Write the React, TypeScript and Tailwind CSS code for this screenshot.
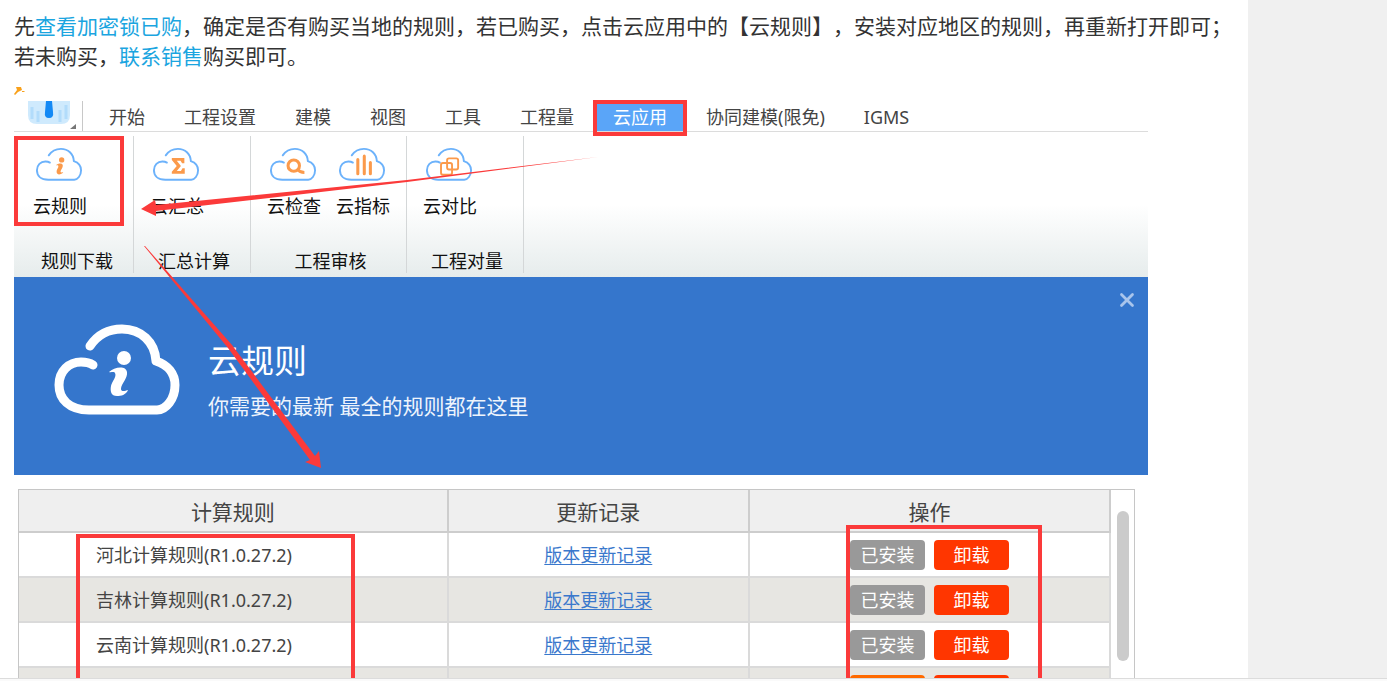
import type { ReactNode } from "react";
import { X } from "lucide-react";

const TABS = ["开始", "工程设置", "建模", "视图", "工具", "工程量", "云应用", "协同建模(限免)", "IGMS"];
const ACTIVE_TAB = "云应用";

const ORANGE = "#fb9a4b";

type Tool = { label: string; glyph: ReactNode };

const GROUPS: { title: string; className: string; tools: Tool[] }[] = [
  {
    title: "规则下载",
    className: "w-[120px] pl-[19px]",
    tools: [{ label: "云规则", glyph: <InfoGlyph color={ORANGE} /> }],
  },
  {
    title: "汇总计算",
    className: "w-[117px] pl-4",
    tools: [
      {
        label: "云汇总",
        glyph: (
          <path
            d="M52 29H85V43H79L75 36H65L76 50L65 63H76L80 56H86V70H52V65L65 50L52 34Z"
            fill={ORANGE}
          />
        ),
      },
    ],
  },
  {
    title: "工程审核",
    className: "w-[156px] pl-4",
    tools: [
      {
        label: "云检查",
        glyph: (
          <g fill="none" stroke={ORANGE} strokeWidth="8">
            <circle cx="65" cy="49" r="15" />
            <path d="M74 58Q81 67 93 67" />
          </g>
        ),
      },
      {
        label: "云指标",
        glyph: (
          <path d="M52 33V70M69 24V70M85 41V70" stroke={ORANGE} strokeWidth="8" strokeLinecap="round" />
        ),
      },
    ],
  },
  {
    title: "工程对量",
    className: "w-[117px] pl-4",
    tools: [
      {
        label: "云对比",
        glyph: (
          <g fill="none" stroke={ORANGE} strokeWidth="5">
            <rect x="42" y="42" width="29" height="31" rx="5" />
            <rect x="58" y="30" width="29" height="29" rx="5" />
          </g>
        ),
      },
    ],
  },
];

const RULES = ["河北计算规则(R1.0.27.2)", "吉林计算规则(R1.0.27.2)", "云南计算规则(R1.0.27.2)"];

function InfoGlyph({ color }: { color: string }) {
  return (
    <g fill={color}>
      <circle cx="70" cy="34" r="7" />
      <path d="M55 48C60 43 72 41 73 48C74 54 67 60 67 65C67 68 71 67 74 66C72 71 67 72 63 72C57 72 56 67 57 62C58 57 63 53 61 49C60 47 57 49 55 48Z" />
    </g>
  );
}

function Cloud({
  className,
  color,
  strokeWidth,
  children,
}: {
  className: string;
  color: string;
  strokeWidth: number;
  children: ReactNode;
}) {
  return (
    <svg viewBox="0 0 126 92" className={className} aria-hidden="true">
      <path
        d="M36 22C44 10 55 5 68 5C87 5 101 18 102 37C114 41 121 50 121 61C121 75 112 86 103 86H35C15 86 5 75 5 61C5 47 15 38 27 38C32 38 36 39 39 41"
        fill="none"
        stroke={color}
        strokeWidth={strokeWidth}
        strokeLinecap="round"
        strokeLinejoin="round"
      />
      {children}
    </svg>
  );
}

function TabBar() {
  return (
    <div className="flex h-[31px] border-b border-[#dcdcdc]">
      <div className="flex w-[69px] shrink-0 border-r border-[#c8c8c8]">
        <svg viewBox="0 0 68 30" className="h-[30px] w-[68px]" aria-hidden="true">
          <path d="M14 0H56V14Q56 23 47 23H23Q14 23 14 14Z" fill="#cfeafd" />
          <path d="M18 6V18M24 10V21M46 9V21M52 4V18" stroke="#b2dcfb" strokeWidth="3" />
          <path d="M32 0H38L39 11Q40 17 35 17Q30 17 31 11Z" fill="#1389f5" />
          <path d="M62 23V28H56Z" fill="#777" />
        </svg>
      </div>
      <nav className="flex gap-px pl-[7px]">
        {TABS.map((tab) => (
          <button
            key={tab}
            className={
              tab === ACTIVE_TAB
                ? "relative z-10 bg-[#5aa5f8] px-[19px] text-lg/[32px] whitespace-nowrap text-white"
                : "px-[19px] text-lg/[32px] whitespace-nowrap text-[#444]"
            }
          >
            {tab}
            {tab === ACTIVE_TAB && (
              <span className="absolute -inset-x-px -top-px -bottom-[5px] border-4 border-[#fb3a3a]" />
            )}
          </button>
        ))}
      </nav>
    </div>
  );
}

function Ribbon() {
  return (
    <div className="relative flex h-[145px] bg-linear-to-b from-white from-50% to-[#e6ecec] pt-1 pb-1 text-lg/[24px] text-[#111]">
      {GROUPS.map((group) => (
        <div
          key={group.title}
          className={`flex shrink-0 flex-col justify-between border-r border-[#d4d7d8] ${group.className}`}
        >
          <div className="flex gap-[15px] pt-[11px]">
            {group.tools.map((tool) => (
              <button key={tool.label} className="flex flex-col items-center gap-3 whitespace-nowrap">
                <Cloud className="mr-[2px] h-[35px] w-[48px]" color="#6cb2fb" strokeWidth={5}>
                  {tool.glyph}
                </Cloud>
                {tool.label}
              </button>
            ))}
          </div>
          <div className="-ml-3 text-center">{group.title}</div>
        </div>
      ))}
      <span className="absolute top-1 left-0 h-[90px] w-[110px] border-4 border-[#fb3a3a]" />
    </div>
  );
}

function Banner() {
  return (
    <div className="relative flex h-[198px] items-center bg-[#3576cc] pl-[40px] text-white">
      <Cloud className="mt-[-12px] h-[92px] w-[126px]" color="#fff" strokeWidth={9}>
        <InfoGlyph color="#fff" />
      </Cloud>
      <div className="pt-3 pl-7">
        <h2 className="text-[33px]/[48px]">云规则</h2>
        <p className="text-[21px]/[42px] text-[#eef4fc]">你需要的最新 最全的规则都在这里</p>
      </div>
      <button aria-label="关闭" className="absolute top-3 right-[10px] text-[#a9c5ec]">
        <X size={22} strokeWidth={3} />
      </button>
    </div>
  );
}

function RuleTable() {
  return (
    <div className="relative mt-[14px] mr-[13px] ml-1 flex border border-[#c6c6c6]">
      <table className="w-full table-fixed border-collapse text-lg text-[#444]">
        <colgroup>
          <col className="w-[39.3%]" />
          <col className="w-[27.6%]" />
          <col />
        </colgroup>
        <thead>
          <tr className="h-[42px] border-b-2 border-[#cdcdcd] bg-[#efefef] text-[21px]">
            <th className="border-r-2 border-[#cdcdcd] pt-1 font-normal">计算规则</th>
            <th className="border-r-2 border-[#cdcdcd] pt-1 font-normal">更新记录</th>
            <th className="border-r-2 border-[#cdcdcd] pt-1 font-normal">操作</th>
          </tr>
        </thead>
        <tbody>
          {RULES.map((rule) => (
            <tr key={rule} className="h-[45px] border-b-2 border-[#dadada] even:bg-[#e7e6e2]">
              <td className="border-r-2 border-[#dadada] pl-[77px]">{rule}</td>
              <td className="border-r-2 border-[#dadada] text-center">
                <a href="#log" className="text-[#3a78cc] underline underline-offset-2">
                  版本更新记录
                </a>
              </td>
              <td className="border-r-2 border-[#dadada]">
                <div className="flex justify-center gap-[9px] text-white">
                  <button className="h-[30px] w-[75px] rounded bg-[#999]">已安装</button>
                  <button className="h-[30px] w-[75px] rounded bg-[#ff3600]">卸载</button>
                </div>
              </td>
            </tr>
          ))}
          <tr className="h-[45px] bg-[#e7e6e2]">
            <td className="border-r-2 border-[#dadada]" />
            <td className="border-r-2 border-[#dadada]" />
            <td className="border-r-2 border-[#dadada]">
              <div className="flex justify-center gap-[9px]">
                <button aria-label="更新" className="h-[30px] w-[75px] rounded bg-[#ff6a00]" />
                <button aria-label="卸载" className="h-[30px] w-[75px] rounded bg-[#ff3600]" />
              </div>
            </td>
          </tr>
        </tbody>
      </table>
      <div className="w-[23px] shrink-0 pt-[21px] pl-[6px]">
        <div className="h-[150px] w-3 rounded-full bg-[#cbcbcb]" />
      </div>
      <span className="absolute top-[44px] left-[57px] h-[200px] w-[279px] border-4 border-[#fb3a3a]" />
      <span className="absolute top-[35px] right-[92px] h-[209px] w-[196px] border-4 border-[#fb3a3a]" />
    </div>
  );
}

// Tapered pointers running from the tab to the ribbon, then down to the rule list.
function Arrows() {
  return (
    <svg
      viewBox="0 0 1134 400"
      className="pointer-events-none absolute top-0 left-0 h-[400px] w-[1134px]"
      fill="#fb3a3a"
      aria-hidden="true"
    >
      <path d="M584 56L393 79L142 104L141 99L127 108L142 115L142 110L393 81Z" />
      <path d="M130 145L131 145L218 244L301 355L305 350L307 367L291 361L296 359L214 247Z" />
    </svg>
  );
}

export default function App() {
  return (
    <div className="flex h-screen flex-col overflow-hidden bg-white font-['Noto_Sans','Noto_Sans_CJK_SC',sans-serif]">
      <div className="flex min-h-0 flex-1 overflow-hidden">
        <main className="min-w-0 flex-1 px-[14px] pt-[11px]">
          <p className="text-[21px]/[30px] text-[#333] [text-spacing-trim:space-all]">
            先
            <a href="#lock" className="text-[#1ba5e0]">
              查看加密锁已购
            </a>
            ，确定是否有购买当地的规则，若已购买，点击云应用中的【云规则】，安装对应地区的规则，再重新打开即可；
            <br />
            若未购买，
            <a href="#sales" className="text-[#1ba5e0]">
              联系销售
            </a>
            购买即可。
          </p>
          <svg viewBox="0 0 12 10" className="mt-[15px] mb-[5px] h-[10px] w-3" aria-hidden="true">
            <path d="M2 1H7L8 4L4 6L1 9L0 8L3 4ZM8 5H10L11 6H8Z" fill="#f9a11b" />
          </svg>
          <div className="relative max-w-[1134px]">
            <TabBar />
            <Ribbon />
            <Banner />
            <RuleTable />
            <Arrows />
          </div>
        </main>
        <aside className="w-[10%] shrink-0 bg-[#f0f0f0]" />
      </div>
      <footer className="h-[3px] shrink-0 border-t border-[#dcdcdc] bg-[#fafafa]" />
    </div>
  );
}
